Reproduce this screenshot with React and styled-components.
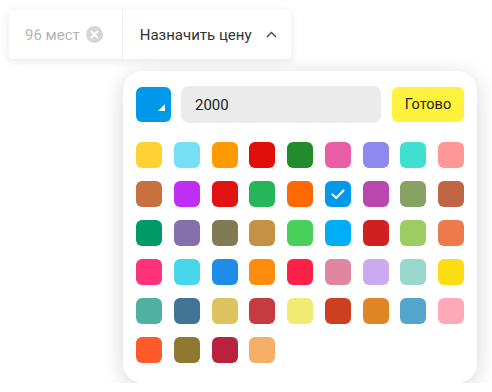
import React from 'react'
import styled, { createGlobalStyle } from 'styled-components'

const Global = createGlobalStyle`
  body {
    margin: 0;
    background: #fff;
    font-family: Roboto, "Noto Sans", sans-serif;
  }
`

const colors = [
  '#ffd233', '#74dff5', '#ff9a00', '#e00f0a', '#228b2e', '#e85ea6', '#8d89ef', '#40e0d0', '#ff9896',
  '#c87040', '#c02ff5', '#e01313', '#26b55a', '#ff6a00', '#0098e8', '#b847ae', '#87a263', '#c06645',
  '#009a66', '#8470ab', '#807b55', '#c59145', '#49d05a', '#00aef5', '#d21f1f', '#9dcc63', '#ed7a4b',
  '#ff327a', '#46d8ea', '#1e8de8', '#ff8c0d', '#ff2048', '#de86a0', '#cbabf0', '#98d8cd', '#fcdc13',
  '#52b0a2', '#437496', '#ddc35f', '#c53b40', '#f2eb73', '#cc3f21', '#df8523', '#52a6cc', '#ffa8b6',
  '#ff5a2b', '#8f7830', '#b8223e', '#f4ae66',
]

const Page = styled.div`
  padding: 10px 0 0 9px;
`

const Bar = styled.div`
  display: flex;
  width: 282px;
  height: 49px;
  background: #fff;
  border-radius: 4px;
  box-shadow: 0 2px 10px rgba(0, 0, 0, 0.1);
`

const Seats = styled.div`
  display: flex;
  align-items: center;
  gap: 6px;
  padding: 0 19px 0 16px;
  border-right: 1px solid #ededed;
  color: #b4b4b4;
  font-size: 15px;
`

const Clear = styled.span`
  width: 17px;
  height: 17px;
  border-radius: 50%;
  background: #d6d6d6;
  display: flex;
  align-items: center;
  justify-content: center;
`

const PriceBtn = styled.div`
  display: flex;
  align-items: center;
  gap: 14px;
  padding-left: 17px;
  color: #333;
  font-size: 15px;
`

const Popover = styled.div`
  margin: 12px 0 0 114px;
  width: 328px;
  padding: 15px 13px 20px;
  background: #fff;
  border-radius: 20px;
  box-shadow: 0 4px 22px rgba(0, 0, 0, 0.16);
`

const Header = styled.div`
  display: flex;
  align-items: center;
`

const ColorBtn = styled.div`
  position: relative;
  width: 35px;
  height: 35px;
  border-radius: 6px;
  background: ${p => p.color};
  &::after {
    content: '';
    position: absolute;
    right: 6px;
    bottom: 11px;
    border-style: solid;
    border-width: 0 0 7px 7px;
    border-color: transparent transparent #fff transparent;
  }
`

const Input = styled.div`
  width: 186px;
  height: 37px;
  margin-left: 10px;
  padding-left: 14px;
  border-radius: 8px;
  background: #ebebeb;
  display: flex;
  align-items: center;
  font-size: 15px;
  color: #222;
`

const Done = styled.div`
  margin-left: 11px;
  width: 72px;
  height: 35px;
  border-radius: 6px;
  background: #fff23c;
  display: flex;
  align-items: center;
  justify-content: center;
  font-size: 14.5px;
  color: #222;
`

const Grid = styled.div`
  margin-top: 19px;
  display: grid;
  grid-template-columns: repeat(9, 26px);
  justify-content: space-between;
  row-gap: 13px;
`

const Swatch = styled.div`
  width: 26px;
  height: 26px;
  border-radius: 6px;
  background: ${p => p.color};
  display: flex;
  align-items: center;
  justify-content: center;
`

const Check = () => (
  <svg width="16" height="16" viewBox="0 0 16 16">
    <path d="M2.5 8.5 L6.2 12 L13.5 4.5" fill="none" stroke="#fff" strokeWidth="2.2" strokeLinecap="round" strokeLinejoin="round" />
  </svg>
)

export default function App() {
  const selected = 14
  return (
    <Page>
      <Global />
      <Bar>
        <Seats>
          96 мест
          <Clear>
            <svg width="9" height="9" viewBox="0 0 9 9">
              <path d="M1.5 1.5 L7.5 7.5 M7.5 1.5 L1.5 7.5" stroke="#fff" strokeWidth="1.8" strokeLinecap="round" />
            </svg>
          </Clear>
        </Seats>
        <PriceBtn>
          Назначить цену
          <svg width="11" height="7" viewBox="0 0 11 7">
            <path d="M1 6 L5.5 1.5 L10 6" fill="none" stroke="#444" strokeWidth="1.3" />
          </svg>
        </PriceBtn>
      </Bar>
      <Popover>
        <Header>
          <ColorBtn color={colors[selected]} />
          <Input>2000</Input>
          <Done>Готово</Done>
        </Header>
        <Grid>
          {colors.map((c, i) => (
            <Swatch key={i} color={c}>{i === selected && <Check />}</Swatch>
          ))}
        </Grid>
      </Popover>
    </Page>
  )
}
